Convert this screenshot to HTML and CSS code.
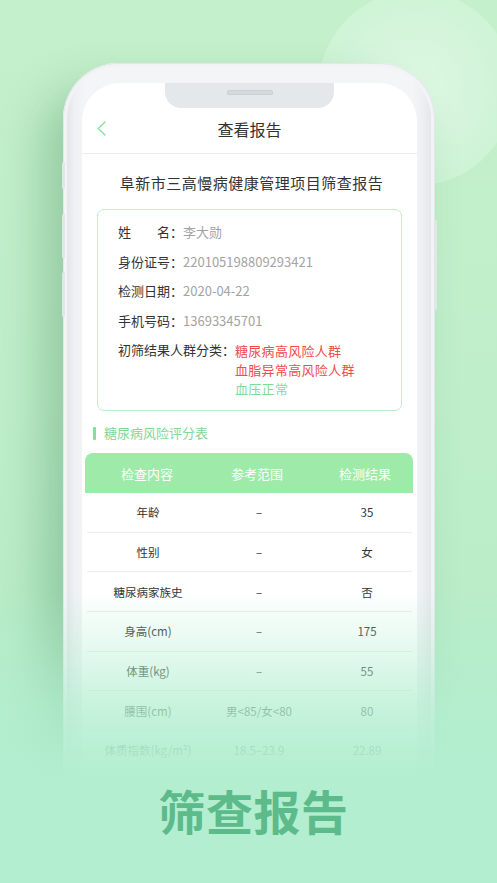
FILE: index.html
```html
<!DOCTYPE html>
<html lang="zh-CN">
<head>
<meta charset="utf-8">
<title>筛查报告</title>
<link rel="stylesheet" href="styles.css">
</head>
<body>
<div class="page">
  <div class="stage">
    <div class="phone">
      <span class="btn btn-l1"></span>
      <span class="btn btn-l2"></span>
      <span class="btn btn-l3"></span>
      <span class="btn btn-r1"></span>
      <div class="screen">
        <div class="notch"><span class="speaker"></span></div>
        <div class="nav">
          <svg class="back" width="9" height="15" viewBox="0 0 9 15"><polyline points="8,1 1.2,7.5 8,14" fill="none" stroke="#7fe29d" stroke-width="1.3" stroke-linecap="round" stroke-linejoin="round"/></svg>
          <div class="nav-title">查看报告</div>
        </div>
        <div class="report-title">阜新市三高慢病健康管理项目筛查报告</div>
        <div class="info">
          <div class="row"><span class="label">姓　　名：</span><span class="val">李大勋</span></div>
          <div class="row"><span class="label">身份证号：</span><span class="val">220105198809293421</span></div>
          <div class="row"><span class="label">检测日期：</span><span class="val">2020-04-22</span></div>
          <div class="row"><span class="label">手机号码：</span><span class="val">13693345701</span></div>
          <div class="row"><span class="label">初筛结果人群分类：</span>
            <div class="results">
              <span class="red">糖尿病高风险人群</span>
              <span class="red">血脂异常高风险人群</span>
              <span class="green">血压正常</span>
            </div>
          </div>
        </div>
        <div class="section"><span class="bar"></span>糖尿病风险评分表</div>
        <div class="table">
          <div class="thead"><span>检查内容</span><span>参考范围</span><span class="c3">检测结果</span></div>
          <div class="tr"><span>年龄</span><span>–</span><span class="c3">35</span></div>
          <div class="tr"><span>性别</span><span>–</span><span class="c3">女</span></div>
          <div class="tr"><span>糖尿病家族史</span><span>–</span><span class="c3">否</span></div>
          <div class="tr"><span>身高(cm)</span><span>–</span><span class="c3">175</span></div>
          <div class="tr"><span>体重(kg)</span><span>–</span><span class="c3">55</span></div>
          <div class="tr"><span>腰围(cm)</span><span>男&lt;85/女&lt;80</span><span class="c3">80</span></div>
          <div class="tr"><span>体质指数(kg/m²)</span><span>18.5–23.9</span><span class="c3">22.89</span></div>
        </div>
      </div>
    </div>
  </div>
  <div class="fade"></div>
  <div class="slogan">筛查报告</div>
</div>
</body>
</html>
```

FILE: styles.css
```css
* { box-sizing: border-box; }
html, body { margin: 0; padding: 0; }
body {
  font-family: "Noto Sans CJK SC", "Noto Sans", sans-serif;
  width: 497px;
  height: 883px;
  overflow: hidden;
}
.page {
  width: 497px;
  height: 883px;
  overflow: hidden;
  display: grid;
  grid-template-rows: 883px;
  background:
    radial-gradient(circle 98px at 416px 88px, rgba(230, 250, 234, 0.75) 0, rgba(220, 248, 226, 0.45) 97px, rgba(220, 248, 226, 0) 98px),
    linear-gradient(180deg, #c4f0cb 0%, #bfefca 45%, #b8ecc8 75%, #b2eecf 100%);
}
.page > * { grid-area: 1 / 1; min-height: 0; }

.stage { padding: 63px 0 0 63px; overflow: hidden; }

.phone {
  position: relative;
  z-index: 1;
  width: 372px;
  height: 820px;
  border-radius: 56px 56px 0 0;
  padding: 20px 18px 0 19px;
  background: linear-gradient(90deg, #dcdfe4 0%, #eef0f3 3%, #f4f5f7 6%, #f4f5f7 94%, #eceef1 97%, #dfe2e6 100%);
  box-shadow: -22px 24px 44px rgba(60, 130, 80, 0.32), inset 0 0 0 1px #e3e6ea, inset 0 0 0 4px #f2f3f5;
}
.btn {
  position: absolute;
  width: 3px;
  background: #e2e5e9;
  border-radius: 2px;
}
.btn-l1 { left: -1px; top: 99px; height: 27px; }
.btn-l2 { left: -1px; top: 151px; height: 44px; }
.btn-l3 { left: -1px; top: 209px; height: 45px; }
.btn-r1 { right: -2px; top: 157px; height: 90px; }

.screen {
  width: 335px;
  height: 800px;
  background: #fff;
  border-radius: 38px 38px 0 0;
  overflow: hidden;
}
.notch {
  width: 169px;
  height: 25px;
  margin: 0 auto;
  background: #e5e8eb;
  border-radius: 0 0 16px 16px;
  display: flex;
  justify-content: center;
  padding-top: 7px;
}
.speaker {
  width: 46px;
  height: 5px;
  border-radius: 3px;
  background: #d6d9dd;
  box-shadow: inset 0 0 0 1px #ccd0d4;
}
.nav {
  height: 46px;
  display: grid;
  grid-template-columns: 1fr auto 1fr;
  align-items: center;
  padding: 0 15px 4px;
  border-bottom: 1px solid #ececec;
}
.back { display: block; }
.nav-title {
  font-size: 16px;
  color: #333;
  line-height: 22px;
}
.report-title {
  padding-top: 18px;
  text-align: center;
  font-size: 15px;
  letter-spacing: 0.5px;
  line-height: 22px;
  color: #333;
  padding-left: 4px;
}
.info {
  margin: 15px 15px 0;
  height: 202px;
  border: 1.5px solid #bdf0c8;
  border-radius: 7px;
  padding: 12px 20px 0;
  display: flex;
  flex-direction: column;
  gap: 9.6px;
}
.row {
  display: flex;
  font-size: 13px;
  line-height: 20px;
}
.label { color: #333; white-space: nowrap; }
.val { color: #a3a3a3; }
.results {
  display: flex;
  flex-direction: column;
  line-height: 19.3px;
  padding-top: 0.5px;
  letter-spacing: 0.3px;
}
.red { color: #f34a4a; }
.green { color: #7fdc98; }

.section {
  margin-top: 12px;
  padding-left: 11px;
  display: flex;
  align-items: center;
  font-size: 13px;
  line-height: 20px;
  color: #7ed896;
}
.bar {
  width: 3px;
  height: 13px;
  background: #7fe19c;
  border-radius: 1px;
  margin-right: 8px;
}
.table {
  margin: 10px 4px 0 3px;
}
.thead, .tr {
  display: grid;
  grid-template-columns: 124px 96px 108px;
  align-items: center;
  text-align: center;
}
.thead {
  height: 40px;
  background: #9eeaa9;
  border-radius: 8px 8px 0 0;
  color: #fff;
  font-size: 13px;
}
.tr {
  height: 39.7px;
  margin: 0 1px 0 2px;
  border-bottom: 1px solid #ececec;
  font-size: 11.5px;
  color: #333;
}
.tr span:first-child { padding-right: 2px; }
.c3 { padding-left: 12px; }

.fade {
  position: relative;
  z-index: 2;
  pointer-events: none;
  background: linear-gradient(180deg,
    rgba(178, 238, 207, 0) 0,
    rgba(178, 238, 207, 0) 590px,
    rgba(178, 238, 207, 0.35) 650px,
    rgba(178, 238, 207, 0.75) 710px,
    rgba(178, 238, 207, 0.93) 755px,
    #b2eecf 790px,
    #b2eecf 100%);
}
.slogan {
  position: relative;
  z-index: 3;
  align-self: end;
  text-align: center;
  padding: 0 0 50px 10px;
  font-size: 47px;
  line-height: 47px;
  font-weight: 700;
  letter-spacing: 0.5px;
  color: #5cba8b;
}
```
